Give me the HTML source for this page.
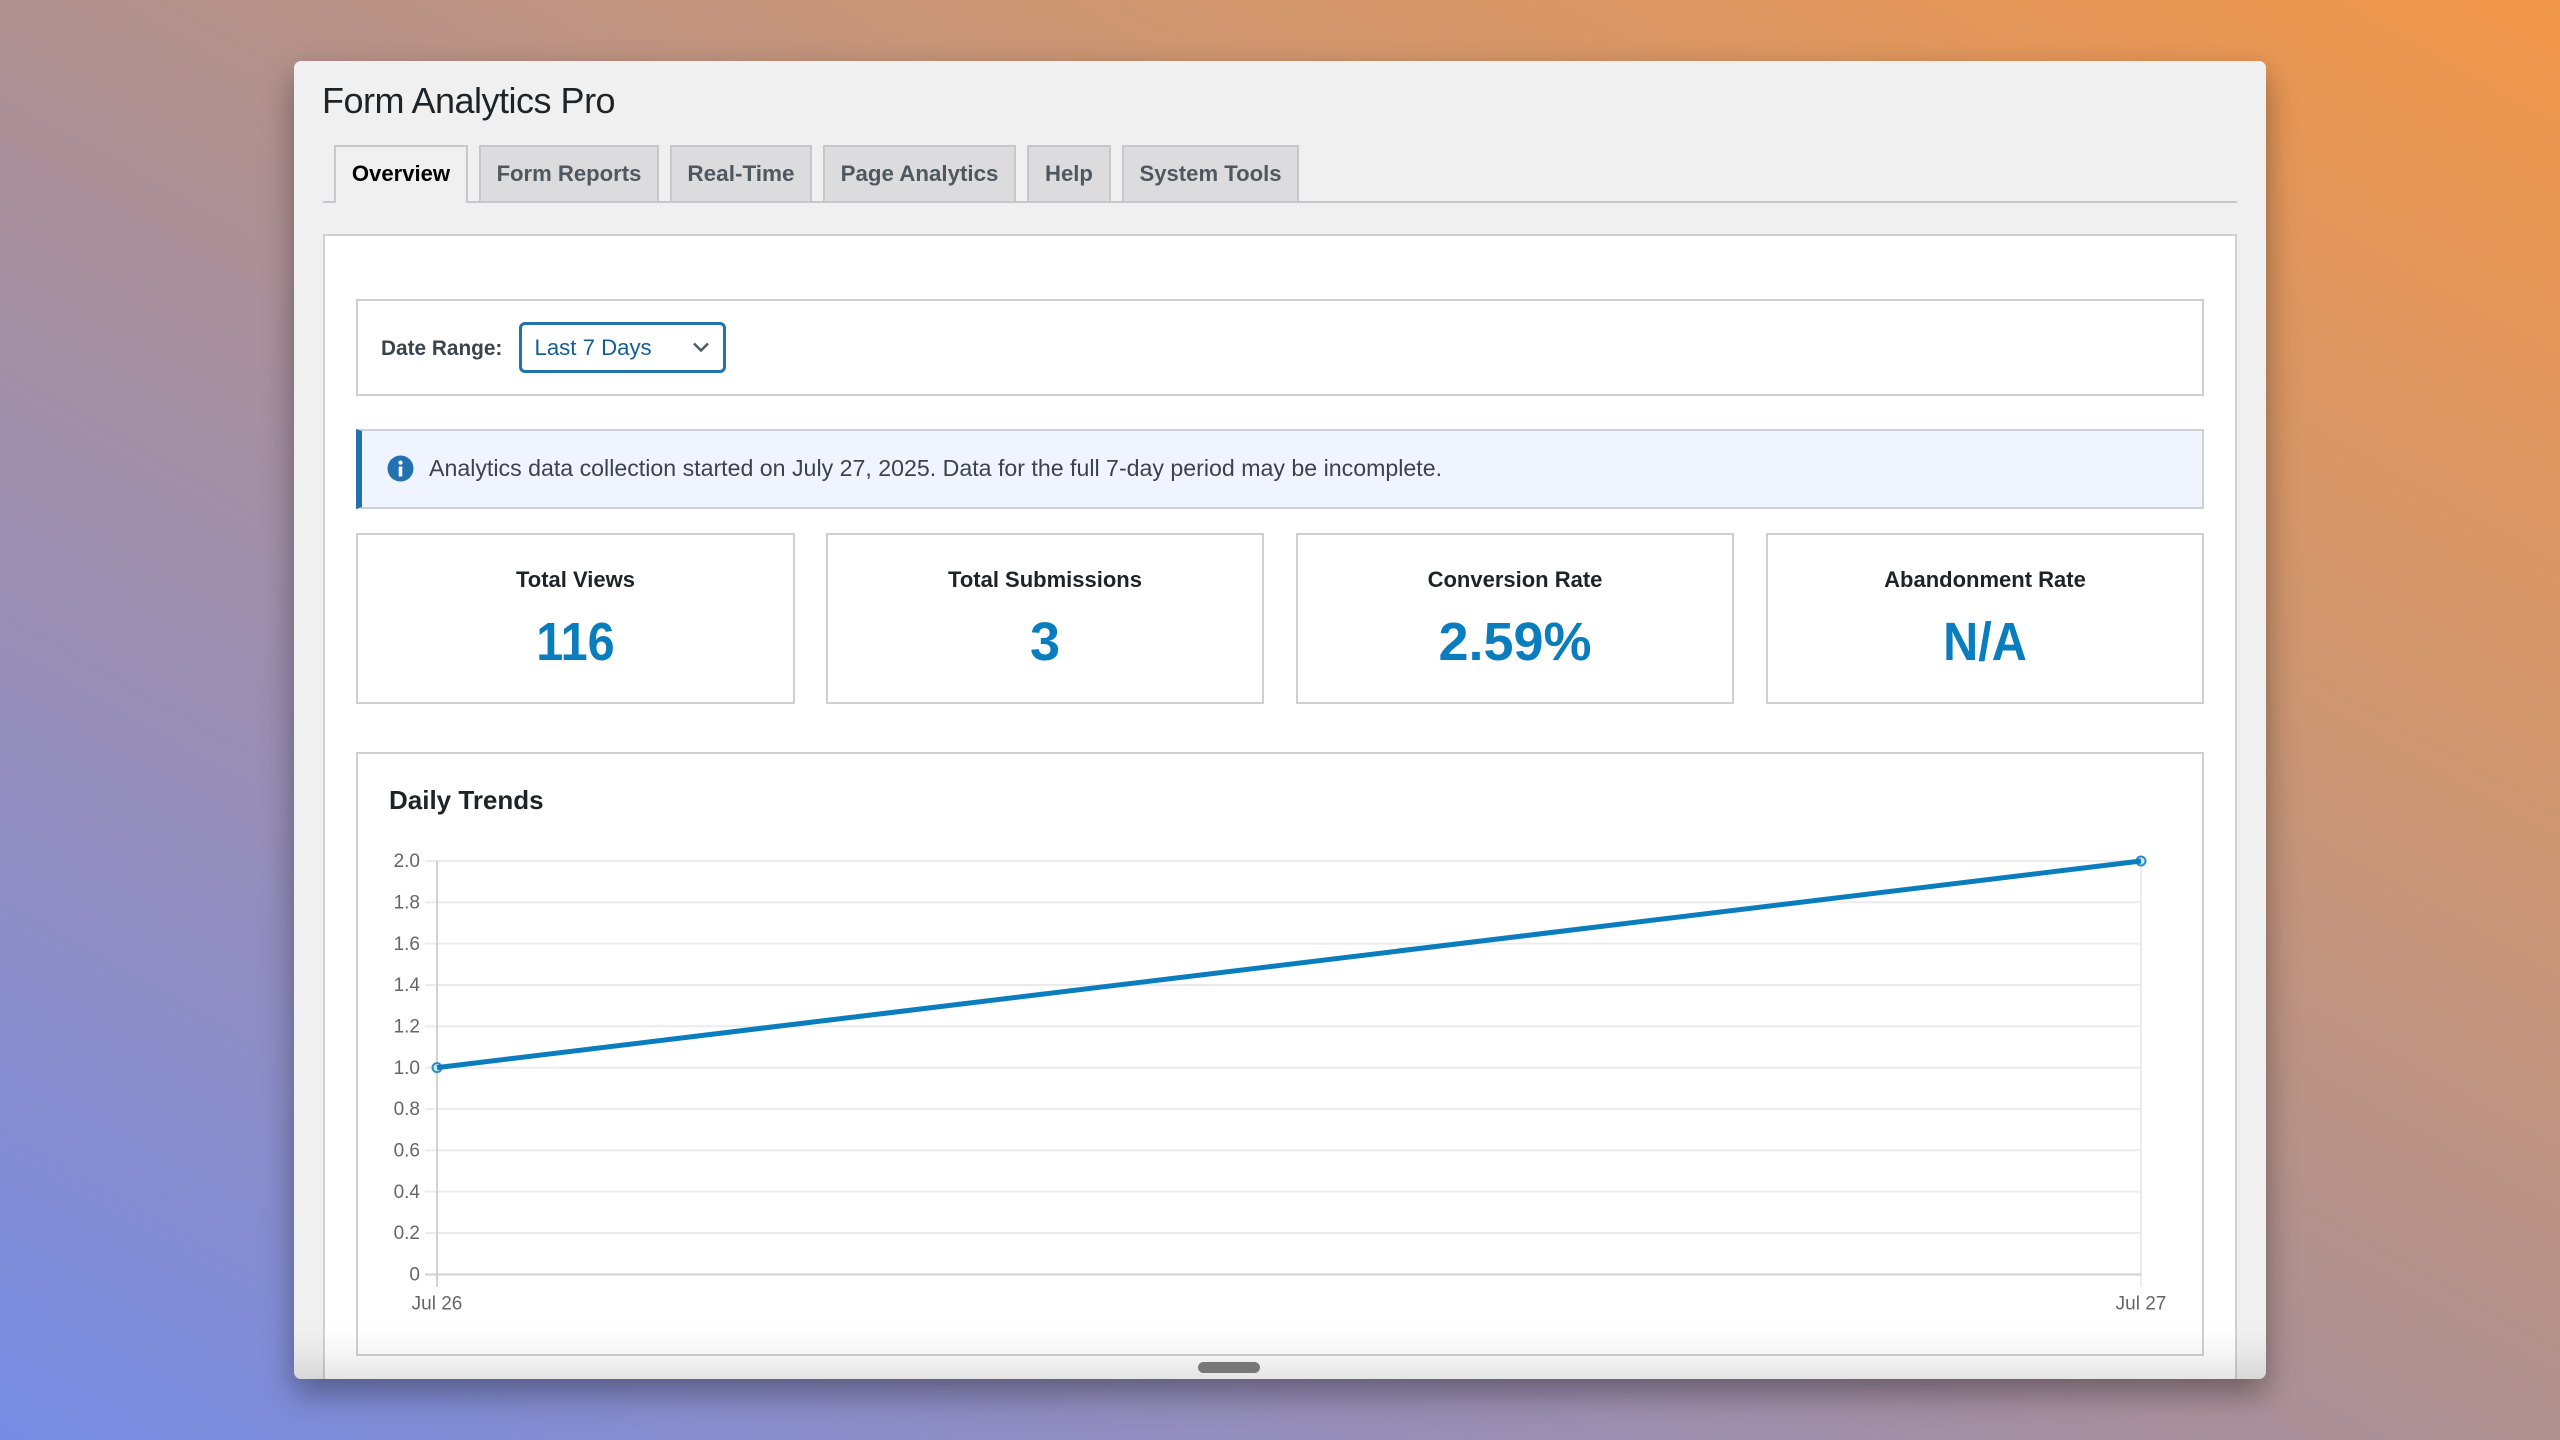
<!DOCTYPE html>
<html><head><meta charset="utf-8"><title>Form Analytics Pro</title>
<style>
html,body{margin:0;padding:0;width:2560px;height:1440px;overflow:hidden}
body{position:relative;background:linear-gradient(to top right,#768ce4 0%,#8f8dc4 20%,#b09191 50%,#cf9670 72%,#f2974a 100%);font-family:"Liberation Sans",Arial,sans-serif}
div,span{position:absolute;box-sizing:border-box;white-space:nowrap}
#win{left:294px;top:61px;width:1972px;height:1318px;background:#f0f0f1;border-radius:7px;box-shadow:0 14px 32px rgba(0,0,0,.36);overflow:hidden}
.box{background:#fff;border:2px solid #cfd0d2}
.tab{top:84px;height:56px;background:#dcdcde;border:2px solid #c6c7ca;border-bottom:none;color:#50575e;font-weight:700;font-size:22.1px;line-height:54px;text-align:center}
.t{left:0;right:0;text-align:center;font-weight:700;font-size:22px;color:#1d2327;top:32px;line-height:26px}
.v{left:0;right:0;text-align:center;font-weight:700;font-size:54px;color:#0a7dbe;top:77px;line-height:60px}
svg{position:absolute}
</style></head><body>
<div id="win">
  <span style="left:28px;top:18px;font-size:36px;line-height:44px;color:#1d2327;letter-spacing:-.5px">Form Analytics Pro</span>
  <div style="left:29px;top:140px;width:1914px;height:2px;background:#c6c7ca"></div>
  <div class="tab" style="left:40px;width:134px;height:58px;background:#f0f0f1;color:#000">Overview</div>
  <div class="tab" style="left:185px;width:180px">Form Reports</div>
  <div class="tab" style="left:376px;width:142px;font-size:22.5px">Real-Time</div>
  <div class="tab" style="left:529px;width:193px;font-size:22.3px">Page Analytics</div>
  <div class="tab" style="left:733px;width:84px">Help</div>
  <div class="tab" style="left:828px;width:177px">System Tools</div>

  <div style="left:29px;top:173px;width:1914px;height:1160px;background:#fff;border:2px solid #cfd0d2"></div>

  <div class="box" style="left:62px;top:238px;width:1848px;height:97px"></div>
  <span style="left:87px;top:275px;font-size:20.800px;font-weight:700;line-height:26px;color:#3c434a">Date Range:</span>
  <div style="left:225px;top:261px;width:207px;height:51px;background:#fff;border:3px solid #2271b1;border-radius:6px"></div>
  <span style="left:240.500px;top:274px;font-size:22.200px;line-height:26px;color:#135e96">Last 7 Days</span>
  <svg style="left:397px;top:279px" width="20" height="15" viewBox="0 0 20 15"><path d="M3 3.5 L10 10.5 L17 3.5" fill="none" stroke="#50575e" stroke-width="2.400"/></svg>

  <div style="left:62px;top:368px;width:1848px;height:80px;background:#eff4fe;border:2px solid #cdd0d5;border-left:6px solid #2271b1"></div>
  <svg style="left:93px;top:394px" width="27" height="27" viewBox="0 0 27 27"><circle cx="13.500" cy="13.500" r="13" fill="#2271b1"/><rect x="11.700" y="11.500" width="3.600" height="10" fill="#fff"/><circle cx="13.500" cy="7.600" r="2.100" fill="#fff"/></svg>
  <span style="left:135px;top:394px;font-size:23.170px;line-height:27px;color:#3c434a">Analytics data collection started on July 27, 2025. Data for the full 7-day period may be incomplete.</span>

  <div class="box" style="left:62px;top:472px;width:439px;height:171px"><div class="t">Total Views</div><div class="v" style="transform:scaleX(.9)">116</div></div>
  <div class="box" style="left:532px;top:472px;width:438px;height:171px"><div class="t">Total Submissions</div><div class="v">3</div></div>
  <div class="box" style="left:1002px;top:472px;width:438px;height:171px"><div class="t">Conversion Rate</div><div class="v">2.59%</div></div>
  <div class="box" style="left:1472px;top:472px;width:438px;height:171px"><div class="t">Abandonment Rate</div><div class="v" style="transform:scaleX(.9)">N/A</div></div>

  <div class="box" style="left:62px;top:691px;width:1848px;height:604px"></div>
  <span style="left:95px;top:723px;font-size:26px;font-weight:700;line-height:32px;color:#1d2327">Daily Trends</span>
</div>

<svg style="left:0;top:0" width="2560" height="1440" viewBox="0 0 2560 1440">
  <g stroke="#ebebeb" stroke-width="2" fill="none">
    <path d="M425 861H2141M425 902.300H2141M425 943.600H2141M425 985H2141M425 1026.300H2141M425 1067.600H2141M425 1109H2141M425 1150.300H2141M425 1191.600H2141M425 1233H2141"/>
    <path d="M2141 861V1287"/>
  </g>
  <path d="M425 1274.500H2141M437 861V1287" stroke="#d2d2d2" stroke-width="2" fill="none"/>
  <circle cx="437" cy="1067.600" r="4.500" fill="#cfe6f4" stroke="#2a8dc8" stroke-width="2"/>
  <circle cx="2141" cy="861" r="4.500" fill="#cfe6f4" stroke="#2a8dc8" stroke-width="2"/>
  <path d="M437 1067.600L2141 861" stroke="#0a7dbe" stroke-width="5" fill="none"/>
  <g font-family="'Liberation Sans',Arial,sans-serif" font-size="19" fill="#666" text-anchor="end">
    <text x="420" y="867">2.0</text><text x="420" y="908.500">1.8</text><text x="420" y="950">1.6</text><text x="420" y="991">1.4</text><text x="420" y="1032.500">1.2</text><text x="420" y="1074">1.0</text><text x="420" y="1115">0.8</text><text x="420" y="1156.500">0.6</text><text x="420" y="1198">0.4</text><text x="420" y="1239">0.2</text><text x="420" y="1280.500">0</text>
  </g>
  <g font-family="'Liberation Sans',Arial,sans-serif" font-size="19" fill="#666" text-anchor="middle">
    <text x="437" y="1309.500">Jul 26</text><text x="2141" y="1309.500">Jul 27</text>
  </g>
</svg>

<div style="left:294px;top:1308px;width:1972px;height:71px;border-radius:0 0 7px 7px;background:linear-gradient(to bottom,rgba(0,0,0,0) 0%,rgba(0,0,0,.005) 30%,rgba(0,0,0,.03) 60%,rgba(0,0,0,.1) 100%)"></div>
<div style="left:1198px;top:1362px;width:62px;height:11px;background:#777;border-radius:6px"></div>
</body></html>
